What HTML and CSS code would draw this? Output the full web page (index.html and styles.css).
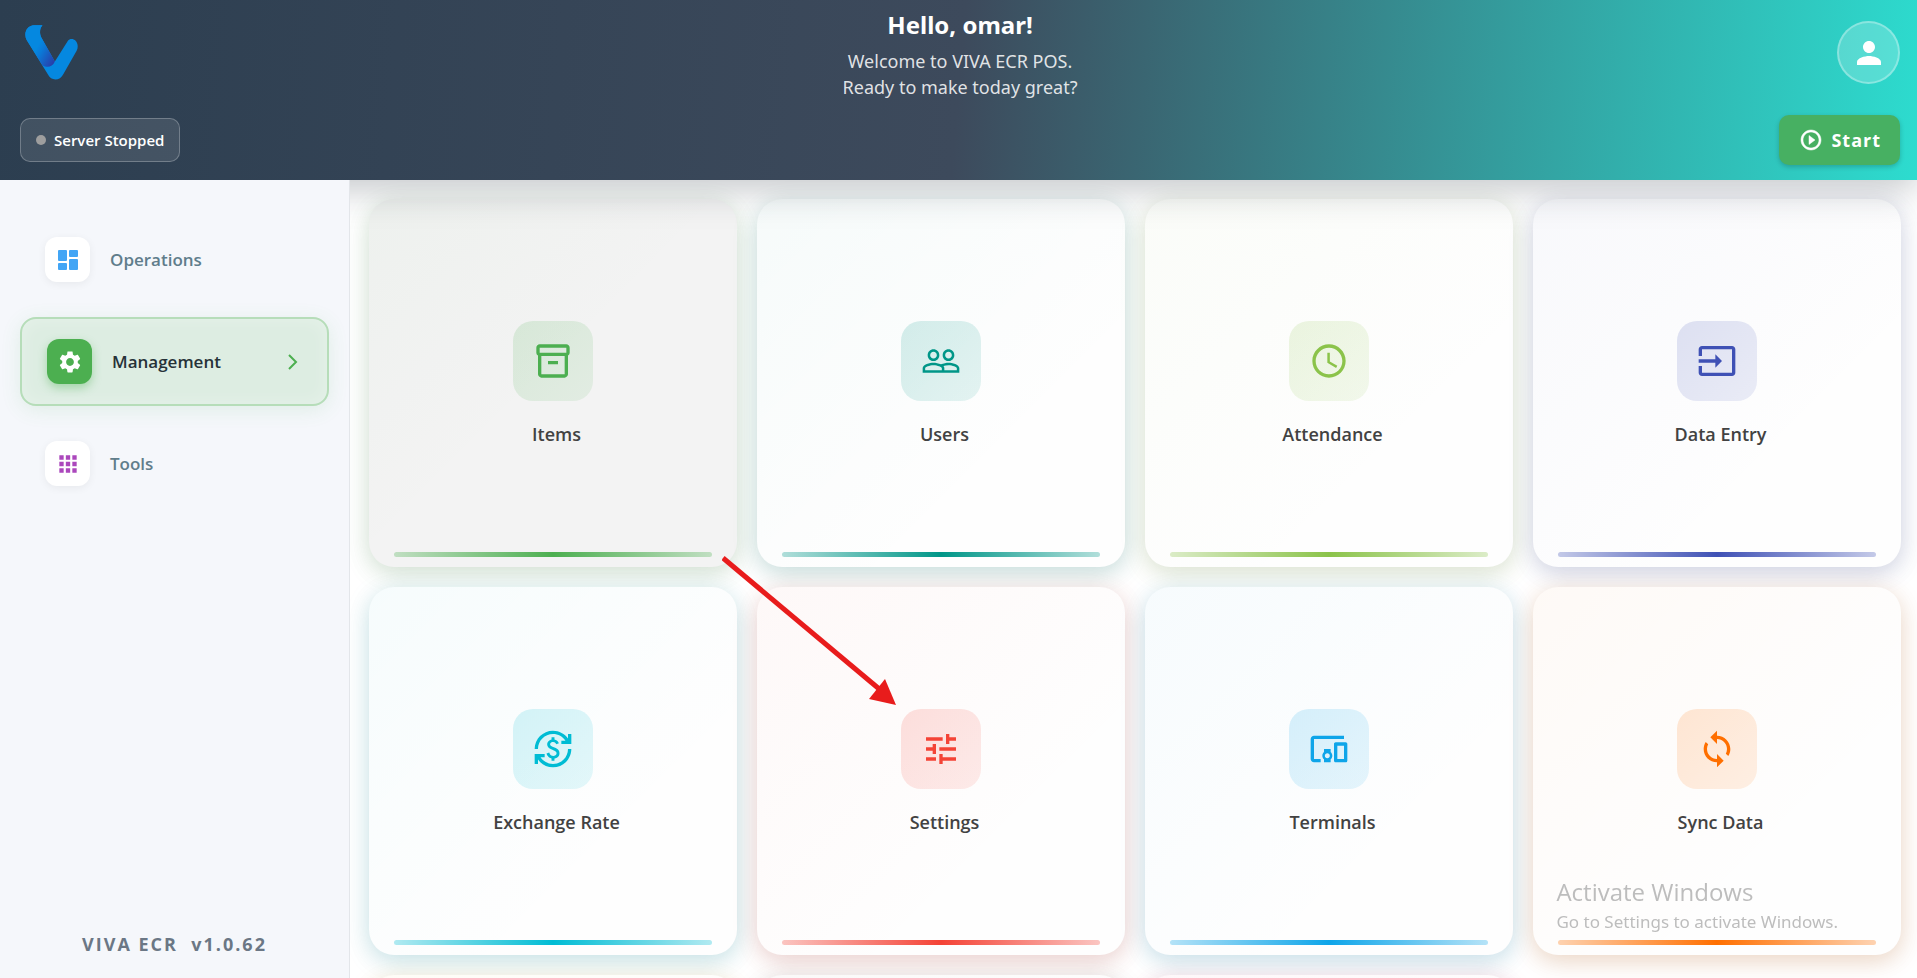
FILE: index.html
```html
<!DOCTYPE html>
<html lang="en">

<head>
    <meta charset="UTF-8">
    <meta name="viewport" content="width=device-width, initial-scale=1.0">
    <title>VIVA ECR POS</title>
    <link rel="stylesheet" href="styles.css">
</head>

<body>
    <div class="app">
        <header class="header">
            <div class="header-top">
                <svg class="logo" viewBox="75 75 158 164">
                    <defs>
                        <linearGradient id="arm" gradientUnits="userSpaceOnUse" x1="105" y1="150" x2="165" y2="185">
                            <stop offset="0" stop-color="#0588e0" />
                            <stop offset="0.25" stop-color="#0a7ad8" />
                            <stop offset="1" stop-color="#2a3aa6" />
                        </linearGradient>
                    </defs>
                    <path fill="#0588e0" d="M102 76H127C118 86 118 101 124 113L164 184L203 122C208 115 219 115 226 122C233 130 234 142 229 152L190 220C179 243 153 243 143 222L80 120C70 100 80 77 102 76Z" />
                    <path fill="url(#arm)" d="M102 76H127C118 86 118 101 124 113L164 184C156 202 140 203 127 195L80 120C70 100 80 77 102 76Z" />
                </svg>
                <div class="greeting">
                    <h1>Hello, omar!</h1>
                    <p>Welcome to VIVA ECR POS.<br>Ready to make today great?</p>
                </div>
                <button class="avatar" aria-label="Profile">
                    <svg viewBox="0 0 24 24"><path d="M12 12c2.21 0 4-1.79 4-4s-1.79-4-4-4-4 1.79-4 4 1.79 4 4 4zm0 2c-2.67 0-8 1.34-8 4v2h16v-2c0-2.66-5.33-4-8-4z" /></svg>
                </button>
            </div>
            <div class="header-bottom">
                <div class="status"><span class="dot"></span>Server Stopped</div>
                <button class="start">
                    <svg viewBox="0 0 24 24"><path d="M10 16.5l6-4.5-6-4.5v9zM12 2C6.48 2 2 6.48 2 12s4.48 10 10 10 10-4.48 10-10S17.52 2 12 2zm0 18c-4.41 0-8-3.59-8-8s3.59-8 8-8 8 3.59 8 8-3.59 8-8 8z" /></svg>
                    Start
                </button>
            </div>
        </header>

        <div class="body">
            <nav class="sidebar">
                <button class="nav-item blue">
                    <span class="nav-icon"><svg viewBox="0 0 26 26"><rect x="3" y="3" width="9" height="11" rx="1" /><rect x="3" y="16" width="9" height="7" rx="1" /><rect x="14" y="3" width="9" height="7" rx="1" /><rect x="14" y="12" width="9" height="11" rx="1" /></svg></span>
                    Operations
                </button>
                <button class="nav-item active">
                    <span class="nav-icon"><svg viewBox="0 0 24 24"><path d="M19.14 12.94c.04-.3.06-.61.06-.94 0-.32-.02-.64-.07-.94l2.03-1.58c.18-.14.23-.41.12-.61l-1.92-3.32c-.12-.22-.37-.29-.59-.22l-2.39.96c-.5-.38-1.03-.7-1.62-.94L14.4 2.81c-.04-.24-.24-.41-.48-.41h-3.84c-.24 0-.43.17-.47.41l-.36 2.54c-.59.24-1.13.57-1.62.94l-2.39-.96c-.22-.08-.47 0-.59.22L2.74 8.87c-.12.21-.08.47.12.61l2.03 1.58c-.05.3-.09.63-.09.94s.02.64.07.94l-2.03 1.58c-.18.14-.23.41-.12.61l1.92 3.32c.12.22.37.29.59.22l2.39-.96c.5.38 1.03.7 1.62.94l.36 2.54c.05.24.24.41.48.41h3.84c.24 0 .44-.17.47-.41l.36-2.54c.59-.24 1.13-.56 1.62-.94l2.39.96c.22.08.47 0 .59-.22l1.92-3.32c.12-.22.07-.47-.12-.61l-2.01-1.58zM12 15.6c-1.98 0-3.6-1.62-3.6-3.6s1.62-3.6 3.6-3.6 3.6 1.62 3.6 3.6-1.62 3.6-3.6 3.6z" /></svg></span>
                    Management
                    <svg class="chevron" viewBox="0 0 18 18"><path d="M5 2l7 7-7 7" /></svg>
                </button>
                <button class="nav-item purple">
                    <span class="nav-icon"><svg viewBox="0 0 24 24"><path d="M4 8h4V4H4v4zm6 12h4v-4h-4v4zm-6 0h4v-4H4v4zm0-6h4v-4H4v4zm6 0h4v-4h-4v4zm6-10v4h4V4h-4zm-6 4h4V4h-4v4zm6 6h4v-4h-4v4zm0 6h4v-4h-4v4z" /></svg></span>
                    Tools
                </button>
                <div class="version">VIVA ECR&nbsp; v1.0.62</div>
            </nav>

            <main class="content">
                <div class="grid">
                    <button class="card green hover">
                        <span class="card-icon"><svg viewBox="0 0 24 24"><path d="M20 2H4c-1 0-2 .9-2 2v3.01c0 .72.43 1.34 1 1.69V20c0 1.1 1.1 2 2 2h14c.9 0 2-.9 2-2V8.7c.57-.35 1-.97 1-1.69V4c0-1.1-1-2-2-2zm-1 18H5V9h14v11zm1-13H4V4h16v3zM9 12h6v2H9z" /></svg></span>
                        <span class="card-label">Items</span>
                    </button>
                    <button class="card teal">
                        <span class="card-icon"><svg viewBox="0 0 24 24"><path d="M16.5 13c-1.2 0-3.07.34-4.5 1-1.43-.67-3.3-1-4.5-1C5.33 13 1 14.08 1 16.25V19h22v-2.75c0-2.17-4.33-3.25-6.5-3.25zm-4 4.5h-10v-1.25c0-.54 2.56-1.75 5-1.75s5 1.21 5 1.75v1.25zm9 0H14v-1.25c0-.46-.2-.86-.52-1.22.88-.3 1.96-.53 3.02-.53 2.44 0 5 1.21 5 1.75v1.25zM7.5 12c1.93 0 3.5-1.57 3.5-3.5S9.43 5 7.5 5 4 6.57 4 8.5 5.57 12 7.5 12zm0-5.5c1.1 0 2 .9 2 2s-.9 2-2 2-2-.9-2-2 .9-2 2-2zm9 5.5c1.93 0 3.5-1.57 3.5-3.5S18.43 5 16.5 5 13 6.57 13 8.5s1.57 3.5 3.5 3.5zm0-5.5c1.1 0 2 .9 2 2s-.9 2-2 2-2-.9-2-2 .9-2 2-2z" /></svg></span>
                        <span class="card-label">Users</span>
                    </button>
                    <button class="card lime">
                        <span class="card-icon"><svg viewBox="0 0 24 24"><path d="M11.99 2C6.47 2 2 6.48 2 12s4.47 10 9.99 10C17.52 22 22 17.52 22 12S17.52 2 11.99 2zM12 20c-4.42 0-8-3.58-8-8s3.58-8 8-8 8 3.58 8 8-3.58 8-8 8zm.5-13H11v6l5.25 3.15.75-1.23-4.5-2.67z" /></svg></span>
                        <span class="card-label">Attendance</span>
                    </button>
                    <button class="card indigo">
                        <span class="card-icon"><svg viewBox="0 0 24 24"><path d="M21 3.01H3c-1.1 0-2 .9-2 2V9h2V4.99h18v14.03H3V15H1v4.01c0 1.1.9 1.98 2 1.98h18c1.1 0 2-.88 2-1.98v-14c0-1.11-.9-2-2-2zM11 16l4-4-4-4v3H1v2h10v3z" /></svg></span>
                        <span class="card-label">Data Entry</span>
                    </button>
                    <button class="card cyan">
                        <span class="card-icon"><svg viewBox="0 0 24 24"><path d="M12.89 11.1c-1.78-.59-2.64-.96-2.64-1.9 0-1.02 1.11-1.39 1.81-1.39 1.31 0 1.79.99 1.9 1.34l1.58-.67c-.15-.44-.82-1.91-2.66-2.23V5h-1.75v1.26c-2.6.56-2.62 2.85-2.62 2.96 0 2.27 2.25 2.91 3.35 3.31 1.58.56 2.28 1.07 2.28 2.03 0 1.13-1.05 1.61-1.98 1.61-1.82 0-2.34-1.87-2.4-2.09l-1.66.67c.63 2.19 2.28 2.78 3.02 2.96V19h1.75v-1.24c.52-.09 3.02-.59 3.02-3.22.01-1.39-.6-2.61-3-3.44zM3 21H1v-6h6v2H4.52c1.61 2.41 4.36 4 7.48 4 4.97 0 9-4.03 9-9h2c0 6.08-4.92 11-11 11-3.72 0-7.01-1.85-9-4.67V21zm-2-9C1 5.92 5.92 1 12 1c3.72 0 7.01 1.85 9 4.67V3h2v6h-6V7h2.48C17.87 4.59 15.12 3 12 3c-4.97 0-9 4.03-9 9H1z" /></svg></span>
                        <span class="card-label">Exchange Rate</span>
                    </button>
                    <button class="card red">
                        <span class="card-icon"><svg viewBox="0 0 24 24"><path d="M3 17v2h6v-2H3zM3 5v2h10V5H3zm10 16v-2h8v-2h-8v-2h-2v6h2zM7 9v2H3v2h4v2h2V9H7zm14 4v-2H11v2h10zm-6-4h2V7h4V5h-4V3h-2v6z" /></svg></span>
                        <span class="card-label">Settings</span>
                    </button>
                    <button class="card sky">
                        <span class="card-icon"><svg viewBox="0 0 24 24"><path d="M3 6h18V4H3c-1.1 0-2 .9-2 2v12c0 1.1.9 2 2 2h4v-2H3V6zm10 6H9v1.78c-.61.55-1 1.33-1 2.22s.39 1.67 1 2.22V20h4v-1.78c.61-.55 1-1.34 1-2.22s-.39-1.67-1-2.22V12zm-2 5.5c-.83 0-1.5-.67-1.5-1.5s.67-1.5 1.5-1.5 1.5.67 1.5 1.5-.67 1.5-1.5 1.5zM22 8h-6c-.5 0-1 .5-1 1v10c0 .5.5 1 1 1h6c.5 0 1-.5 1-1V9c0-.5-.5-1-1-1zm-1 10h-4v-8h4v8z" /></svg></span>
                        <span class="card-label">Terminals</span>
                    </button>
                    <button class="card orange">
                        <span class="card-icon"><svg viewBox="0 0 24 24"><path d="M12 4V1L8 5l4 4V6c3.31 0 6 2.69 6 6 0 1.01-.25 1.97-.7 2.8l1.46 1.46C19.54 15.03 20 13.57 20 12c0-4.42-3.58-8-8-8zm0 14c-3.31 0-6-2.69-6-6 0-1.01.25-1.97.7-2.8L5.24 7.74C4.46 8.97 4 10.43 4 12c0 4.42 3.58 8 8 8v3l4-4-4-4v3z" /></svg></span>
                        <span class="card-label">Sync Data</span>
                    </button>
                    <div class="card amber"></div>
                    <div class="card brown"></div>
                    <div class="card pink"></div>
                </div>
                <svg class="arrow" viewBox="0 0 176 152">
                    <path stroke="#e81c1c" stroke-width="5" d="M1 3L162 138" />
                    <path fill="#e81c1c" d="M174 150L163 124L147 144Z" />
                </svg>
            </main>
        </div>
    </div>

    <div class="watermark">
        <div class="watermark-title">Activate Windows</div>
        <div>Go to Settings to activate Windows.</div>
    </div>
</body>

</html>
```
FILE: styles.css
```css
* {
    box-sizing: border-box;
}

body {
    margin: 0;
    background-color: #fff;
    font-family: "Open Sans", "Noto Sans", sans-serif;
}

button {
    border: none;
    margin: 0;
    font-family: inherit;
    cursor: pointer;
}

svg {
    display: block;
    fill: currentColor;
}

.app {
    display: flex;
    flex-direction: column;
    height: 100vh;
    overflow: hidden;
}

/* header */
.header {
    position: relative;
    z-index: 1;
    padding: 5px 17px 15px 20px;
    color: white;
    background: linear-gradient(95deg, #2c3e50 0%, #3d4a5c 50%, #2ddccf 100%);
    box-shadow: 0 10px 34px rgba(30, 42, 56, 0.26);
}

.header-top {
    display: grid;
    grid-template-columns: 1fr auto 1fr;
    align-items: center;
}

.logo {
    width: 53px;
    height: 55px;
    margin-left: 5px;
}

.greeting {
    padding-top: 2px;
    text-align: center;
    font-family: "Noto Sans", sans-serif;
}

.greeting h1 {
    margin: 0 0 6px;
    font-size: 24px;
    line-height: 35px;
    font-weight: 700;
}

.greeting p {
    margin: 0;
    font-size: 18px;
    line-height: 26px;
    color: rgba(255, 255, 255, 0.85);
}

.avatar {
    justify-self: end;
    display: flex;
    align-items: center;
    justify-content: center;
    width: 63px;
    height: 63px;
    padding: 0;
    border: 2px solid rgba(255, 255, 255, 0.3);
    border-radius: 50%;
    color: white;
    background-color: rgba(255, 255, 255, 0.2);
}

.avatar svg {
    width: 36px;
}

.header-bottom {
    display: flex;
    justify-content: space-between;
    align-items: center;
    margin-top: 15px;
}

.status {
    display: flex;
    align-items: center;
    gap: 8px;
    height: 44px;
    padding: 0 15px;
    border: 1px solid rgba(255, 255, 255, 0.25);
    border-radius: 10px;
    font-size: 15px;
    font-weight: 600;
    background-color: rgba(255, 255, 255, 0.1);
}

.dot {
    width: 10px;
    height: 10px;
    border-radius: 50%;
    background-color: #9e9e9e;
}

.start {
    display: flex;
    align-items: center;
    gap: 8px;
    height: 50px;
    padding: 0 19px 0 20px;
    border-radius: 10px;
    font-size: 18px;
    font-weight: 700;
    letter-spacing: 1px;
    color: white;
    background-color: #47b062;
    box-shadow: 0 2px 5px rgba(0, 0, 0, 0.2);
}

.start svg {
    width: 24px;
    stroke: currentColor;
    stroke-width: 0.5;
}

/* sidebar */
.body {
    display: flex;
    flex: 1;
    min-height: 0;
}

.sidebar {
    position: relative;
    z-index: 2;
    display: flex;
    flex-direction: column;
    gap: 15px;
    flex: none;
    width: 350px;
    padding: 37px 20px 20px;
    border-right: 1px solid #e3e6ea;
    background-color: #f5f7fb;
}

.nav-item {
    display: flex;
    align-items: center;
    gap: 20px;
    padding: 20px 25px;
    border-radius: 16px;
    font-size: 17px;
    font-weight: 600;
    color: #607d8b;
    background: none;
}

.nav-icon {
    display: flex;
    align-items: center;
    justify-content: center;
    width: 45px;
    height: 45px;
    border-radius: 12px;
    background-color: white;
    box-shadow: 0 2px 8px rgba(0, 0, 0, 0.06);
}

.nav-icon svg {
    width: 26px;
}

.blue .nav-icon {
    color: #42a5f5;
}

.purple .nav-icon {
    color: #ab47bc;
}

.active {
    border: 2px solid #b6ddb9;
    color: #263238;
    background-color: #ddede2;
    box-shadow: 0 4px 20px rgba(76, 175, 80, 0.12), inset 0 0 18px rgba(255, 255, 255, 0.3);
}

.active .nav-icon {
    color: white;
    background-color: #4caf50;
    box-shadow: 0 4px 10px rgba(76, 175, 80, 0.4);
}

.chevron {
    width: 18px;
    margin-left: auto;
    fill: none;
    stroke: #4caf50;
    stroke-width: 2;
}

.version {
    margin-top: auto;
    text-align: center;
    font-size: 18px;
    line-height: 28px;
    font-weight: 700;
    letter-spacing: 2px;
    color: #6b7785;
}

/* cards */
.content {
    position: relative;
    flex: 1;
    padding: 19px 16px 0 19px;
    overflow: hidden;
}

.grid {
    display: grid;
    grid-template-columns: repeat(4, 1fr);
    gap: 20px;
}

.card {
    position: relative;
    display: flex;
    flex-direction: column;
    align-items: center;
    justify-content: center;
    gap: 20px;
    aspect-ratio: 1;
    padding: 2px 0 0;
    border-radius: 25px;
    background: linear-gradient(135deg, rgba(var(--tone), 0.03), rgba(var(--tone), 0) 70%), #fefefe;
    box-shadow: 0 6px 26px rgba(var(--tone), 0.16), 0 6px 24px rgba(0, 0, 0, 0.09);
}

.card::after {
    content: "";
    position: absolute;
    left: 25px;
    right: 25px;
    bottom: 10px;
    height: 5px;
    border-radius: 3px;
    background: linear-gradient(90deg, rgba(var(--tone), 0.3), rgb(var(--tone)), rgba(var(--tone), 0.3));
}

.hover {
    background: linear-gradient(135deg, rgba(var(--tone), 0.03), rgba(var(--tone), 0) 50%), #f3f3f3;
}

.card-icon {
    display: flex;
    align-items: center;
    justify-content: center;
    width: 80px;
    height: 80px;
    border-radius: 20px;
    color: rgb(var(--tone));
    background: linear-gradient(135deg, rgba(var(--tone), 0.16), rgba(var(--tone), 0.1));
}

.card-icon svg {
    width: 40px;
}

.card-label {
    padding-left: 7px;
    font-size: 18px;
    line-height: 27px;
    font-weight: 600;
    color: #424242;
}

.green { --tone: 76, 175, 80; }
.teal { --tone: 0, 150, 136; }
.lime { --tone: 139, 195, 74; }
.indigo { --tone: 63, 81, 181; }
.cyan { --tone: 0, 188, 212; }
.red { --tone: 244, 67, 54; }
.sky { --tone: 14, 165, 233; }
.orange { --tone: 255, 111, 0; }
.amber { --tone: 255, 193, 7; }
.brown { --tone: 121, 85, 72; }
.pink { --tone: 233, 30, 99; }

/* pointer from Items to Settings */
.arrow {
    position: absolute;
    left: 372px;
    top: 375px;
    width: 176px;
    height: 152px;
    fill: none;
}

.watermark {
    position: fixed;
    z-index: 3;
    right: 79px;
    bottom: 44px;
    font-family: "Noto Sans", sans-serif;
    font-size: 17px;
    line-height: 24px;
    color: #bdbdbd;
    pointer-events: none;
}

.watermark-title {
    font-family: "Open Sans", sans-serif;
    font-size: 24px;
    line-height: 36px;
}
```
